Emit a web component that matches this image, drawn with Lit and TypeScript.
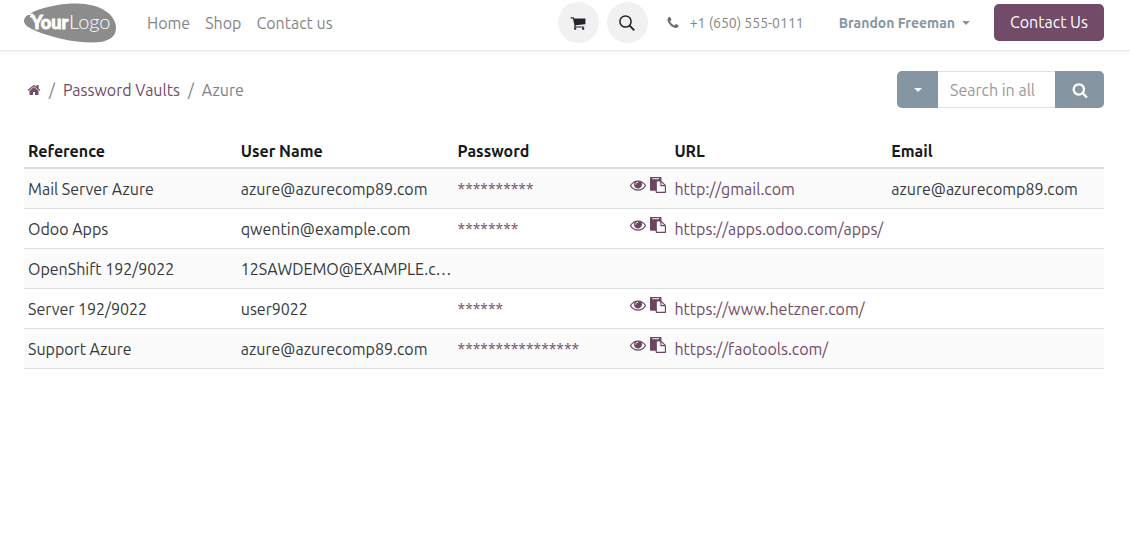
import { LitElement, html, css, svg, nothing } from "lit";
import { customElement, property } from "lit/decorators.js";

const ICONS: Record<string, string> = {
  cart: "M704 1536q0 52-38 90t-90 38-90-38-38-90 38-90 90-38 90 38 38 90zm896 0q0 52-38 90t-90 38-90-38-38-90 38-90 90-38 90 38 38 90zm128-1088v512q0 24-16.500 42.500t-40.500 21.500l-1044 122q13 60 13 70 0 16-24 64h920q26 0 45 19t19 45-19 45-45 19h-1024q-26 0-45-19t-19-45q0-11 8-31.500t16-36 21.500-40 15.500-29.500l-177-823h-204q-26 0-45-19t-19-45 19-45 45-19h256q16 0 28.500 6.500t19.500 15.500 13 24.500 8 26 5.500 29.500 4.500 26h1201q26 0 45 19t19 45z",
  search: "M1216 832q0-185-131.500-316.500t-316.500-131.500-316.500 131.500-131.500 316.500 131.500 316.500 316.500 131.500 316.500-131.500 131.500-316.500zm512 832q0 52-38 90t-90 38q-54 0-90-38l-343-342q-179 124-399 124-143 0-273.500-55.500t-225-150-150-225-55.500-273.500 55.500-273.500 150-225 225-150 273.500-55.500 273.500 55.500 225 150 150 225 55.500 273.500q0 220-124 399l343 343q37 37 37 90z",
  phone: "M1600 1240q0 27-10 70.500t-21 68.500q-21 50-122 106-94 51-186 51-27 0-52.500-3.500t-57.500-12.500-47.500-14.500-55.500-20.500-49-18q-98-35-175-83-128-79-264.500-215.500t-215.500-264.500q-48-77-83-175-3-9-18-49t-20.500-55.500-14.500-47.500-12.500-57.500-3.500-52.500q0-92 51-186 56-101 106-122 25-11 68.500-21t70.500-10q14 0 21 3 18 6 53 76 11 19 30 54t35 63.500 31 53.500q3 4 17.500 25t21.500 35.500 7 28.500q0 20-28.500 50t-62 55-62 53-28.500 46q0 9 5 22.500t8.500 20.500 14 24 11.500 19q76 137 174 235t235 174q2 1 19 11.500t24 14 20.500 8.500 22.500 5q18 0 46-28.500t53-62 55-62 50-28.500q14 0 28.500 7t35.500 21.500 25 17.500q25 15 53.500 31t63.500 35 54 30q70 35 76 53 3 7 3 21z",
  home: "M1472 992v480q0 26-19 45t-45 19h-384v-384h-256v384h-384q-26 0-45-19t-19-45v-480q0-1 .5-3t.5-3l575-474 575 474q1 2 1 6zm223-69l-62 74q-8 9-21 11h-3q-13 0-21-7l-692-577-692 577q-12 8-24 7-13-2-21-11l-62-74q-8-10-7-23.500t11-21.500l719-599q32-26 76-26t76 26l244 204v-195q0-14 9-23t23-9h192q14 0 23 9t9 23v408l219 182q10 8 11 21.500t-7 23.500z",
  eye: "M1664 960q-152-236-381-353 61 104 61 225 0 185-131.500 316.500t-316.500 131.500-316.500-131.500-131.500-316.500q0-121 61-225-229 117-381 353 133 205 333.500 326.500t434.500 121.500 434.500-121.500 333.500-326.500zm-720-384q0-20-14-34t-34-14q-125 0-214.500 89.500t-89.500 214.500q0 20 14 34t34 14 34-14 14-34q0-86 61-147t147-61q20 0 34-14t14-34zm848 384q0 34-20 69-140 230-376.500 368.500t-499.500 138.500-499.500-139-376.500-368q-20-35-20-69t20-69q140-229 376.500-368t499.500-139 499.500 139 376.500 368q20 35 20 69z",
  paste: "M768 1664h896v-640h-416q-40 0-68-28t-28-68v-416h-384v1152zm256-1440v-64q0-13-9.500-22.500t-22.500-9.500h-704q-13 0-22.500 9.500t-9.500 22.500v64q0 13 9.500 22.500t22.500 9.500h704q13 0 22.500-9.500t9.500-22.500zm256 672h299l-299-299v299zm512 128v672q0 40-28 68t-68 28h-960q-40 0-68-28t-28-68v-160h-544q-40 0-68-28t-28-68v-1344q0-40 28-68t68-28h1088q40 0 68 28t28 68v328q21 13 36 28l408 408q28 28 48 76t20 88z",
};

@customElement("glyph-icon")
class GlyphIcon extends LitElement {
  @property() name = "search";

  static styles = css`
    :host {
      display: inline-flex;
      width: 16px;
      height: 16px;
      flex: none;
    }
    svg {
      width: 100%;
      height: 100%;
      fill: currentColor;
    }
  `;

  render() {
    return html`<svg viewBox="0 0 1792 1792" aria-hidden="true">
      ${svg`<path d=${ICONS[this.name]}></path>`}
    </svg>`;
  }
}

interface Entry {
  reference: string;
  user: string;
  password?: number;
  url?: string;
  email?: string;
}

const ENTRIES: Entry[] = [
  {
    reference: "Mail Server Azure",
    user: "azure@azurecomp89.com",
    password: 10,
    url: "http://gmail.com",
    email: "azure@azurecomp89.com",
  },
  { reference: "Odoo Apps", user: "qwentin@example.com", password: 8, url: "https://apps.odoo.com/apps/" },
  { reference: "OpenShift 192/9022", user: "12SAWDEMO@EXAMPLE.com" },
  { reference: "Server 192/9022", user: "user9022", password: 6, url: "https://www.hetzner.com/" },
  { reference: "Support Azure", user: "azure@azurecomp89.com", password: 16, url: "https://faotools.com/" },
];

@customElement("site-header")
class SiteHeader extends LitElement {
  static styles = css`
    :host {
      display: block;
      border-bottom: 1px solid #ececec;
      box-shadow: 0 1px 2px rgba(0, 0, 0, 0.06);
    }
    .bar {
      display: flex;
      align-items: center;
      padding: 2px 26px 7px 24px;
    }
    .logo {
      display: block;
      width: 92px;
      height: 40px;
    }
    .logo svg {
      display: block;
      width: 100%;
      height: 100%;
    }
    .your {
      font: 900 18px Lato, sans-serif;
      stroke: #fff;
      stroke-width: 0.8px;
    }
    .word {
      font: 300 20px Lato, sans-serif;
    }
    nav {
      display: flex;
      gap: 15px;
      margin-left: 31px;
      flex: 1;
    }
    a {
      color: #858585;
      text-decoration: none;
      white-space: nowrap;
    }
    .tools {
      display: flex;
      align-items: center;
      gap: 8px;
    }
    .round {
      display: flex;
      align-items: center;
      justify-content: center;
      width: 41px;
      height: 41px;
      padding: 0;
      border: 0;
      border-radius: 50%;
      background: #f1f1f1;
      color: #212529;
    }
    .phone {
      display: flex;
      align-items: center;
      gap: 10px;
      margin-left: 18px;
      font-size: 14px;
    }
    .phone glyph-icon {
      width: 14px;
      color: #6c6c6c;
    }
    .user {
      display: flex;
      align-items: center;
      gap: 7px;
      margin-left: 35px;
      padding: 0;
      border: 0;
      background: none;
      color: #8595a2;
      font: inherit;
      font-size: 14px;
      font-weight: 700;
      white-space: nowrap;
    }
    .caret {
      border: 4px solid transparent;
      border-top-color: currentColor;
      border-bottom: 0;
    }
    .cta {
      margin-left: 24px;
      padding: 0 16px;
      border-radius: 5px;
      background: #714b67;
      color: #fff;
      line-height: 37px;
    }
  `;

  render() {
    return html`<header class="bar">
      <a class="logo" href="#" aria-label="Your Logo">
        <svg viewBox="0 0 92 40">
          <path
            d="M0 18C0 14 4 11 11 8C24 3 38 .5 52 .5C77 .5 92 12 92 25C92 35 83 39.500 68 39.500C48 39.500 27 34 12 28C5 25 0 22 0 18Z"
            fill="#8c8c8c"
          ></path>
          <path d="M4 10.500h5v1.500h-5zM6 13h3v1.500h-3z" fill="#fff"></path>
          <g fill="#fff">
            <text class="your" x="7" y="26">Your</text>
            <text class="word" x="45" y="26">Logo</text>
          </g>
        </svg>
      </a>
      <nav>
        <a href="#">Home</a>
        <a href="#">Shop</a>
        <a href="#">Contact us</a>
      </nav>
      <div class="tools">
        <button class="round" aria-label="Cart"><glyph-icon name="cart"></glyph-icon></button>
        <button class="round" aria-label="Search">
          <svg width="16" height="16" viewBox="0 0 16 16" fill="none" stroke="currentColor" stroke-width="1.5">
            <circle cx="6.500" cy="6.500" r="5.600"></circle>
            <path d="M10.500 10.500L15.300 15.300" stroke-width="1.800"></path>
          </svg>
        </button>
      </div>
      <a class="phone" href="tel:+16505550111"><glyph-icon name="phone"></glyph-icon>+1 (650) 555-0111</a>
      <button class="user">Brandon Freeman <span class="caret"></span></button>
      <a class="cta" href="#">Contact Us</a>
    </header>`;
  }
}

@customElement("vault-table")
class VaultTable extends LitElement {
  @property({ attribute: false }) entries: Entry[] = [];

  static styles = css`
    :host {
      display: block;
    }
    table {
      width: 100%;
      table-layout: fixed;
      border-collapse: separate;
      border-spacing: 0;
    }
    th {
      box-sizing: border-box;
      padding: 4px;
      border-bottom: 2px solid #dcdddf;
      color: #16191c;
      font-weight: 700;
      line-height: 24px;
      text-align: left;
    }
    .first {
      width: 19.700%;
    }
    td {
      height: 39px;
      padding: 0 0 0 4px;
      border-bottom: 1px solid #dee0e2;
      overflow: hidden;
      text-overflow: ellipsis;
      white-space: nowrap;
    }
    tbody tr:nth-child(odd) td {
      background: #fbfbfb;
    }
    a {
      color: #714b67;
      text-decoration: none;
    }
    .secret {
      display: flex;
      align-items: center;
      justify-content: space-between;
      padding-right: 4px;
      color: #714b67;
    }
    .actions {
      display: flex;
      gap: 4px;
      padding-bottom: 7px;
    }
    .actions button {
      display: flex;
      padding: 0;
      border: 0;
      background: none;
      color: #6b4561;
    }
  `;

  render() {
    return html`<table>
      <thead>
        <tr>
          <th class="first">Reference</th>
          <th>User Name</th>
          <th>Password</th>
          <th>URL</th>
          <th>Email</th>
        </tr>
      </thead>
      <tbody>
        ${this.entries.map(
          (e) => html`<tr>
            <td>${e.reference}</td>
            <td>${e.user}</td>
            <td>
              ${e.password
                ? html`<div class="secret">
                    <span>${"*".repeat(e.password)}</span>
                    <span class="actions">
                      <button aria-label="Show password"><glyph-icon name="eye"></glyph-icon></button>
                      <button aria-label="Copy password"><glyph-icon name="paste"></glyph-icon></button>
                    </span>
                  </div>`
                : nothing}
            </td>
            <td>${e.url ? html`<a href=${e.url}>${e.url}</a>` : nothing}</td>
            <td>${e.email ?? nothing}</td>
          </tr>`
        )}
      </tbody>
    </table>`;
  }
}

@customElement("app-root")
class AppRoot extends LitElement {
  static styles = css`
    :host {
      display: block;
      min-height: 100vh;
      background: #fff;
      color: #35393d;
      font-family: Ubuntu, "Noto Sans", sans-serif;
      font-size: 16px;
      line-height: 24px;
    }
    main {
      padding: 20px 26px 20px 24px;
    }
    .top {
      display: flex;
      align-items: center;
      justify-content: space-between;
      margin-bottom: 27px;
    }
    .crumbs {
      display: flex;
      align-items: center;
      gap: 8px;
      padding-left: 3px;
      color: #7b8086;
    }
    .crumbs a {
      display: flex;
      color: #714b67;
      text-decoration: none;
    }
    .crumbs glyph-icon {
      width: 14px;
    }
    form {
      display: flex;
      height: 37px;
    }
    form button {
      display: flex;
      align-items: center;
      justify-content: center;
      width: 41px;
      padding: 0;
      border: 0;
      border-radius: 5px 0 0 5px;
      background: #8595a2;
      color: #fff;
    }
    form .go {
      width: 49px;
      border-radius: 0 5px 5px 0;
    }
    .caret {
      border: 4px solid transparent;
      border-top-color: currentColor;
      border-bottom: 0;
    }
    input {
      box-sizing: border-box;
      width: 117px;
      padding: 0 12px;
      border: 1px solid #dee2e6;
      border-width: 1px 0;
      border-radius: 0;
      background: #fff;
      color: inherit;
      font: inherit;
    }
    input::placeholder {
      color: #999;
      opacity: 1;
    }
  `;

  render() {
    return html`
      <site-header></site-header>
      <main>
        <div class="top">
          <div class="crumbs">
            <a href="#" aria-label="Home"><glyph-icon name="home"></glyph-icon></a>
            <span>/</span>
            <a href="#">Password Vaults</a>
            <span>/</span>
            <span>Azure</span>
          </div>
          <form role="search">
            <button type="button" aria-label="Search options"><span class="caret"></span></button>
            <input type="text" aria-label="Search in all" placeholder="Search in all" />
            <button class="go" type="button" aria-label="Search"><glyph-icon name="search"></glyph-icon></button>
          </form>
        </div>
        <vault-table .entries=${ENTRIES}></vault-table>
      </main>
    `;
  }
}
